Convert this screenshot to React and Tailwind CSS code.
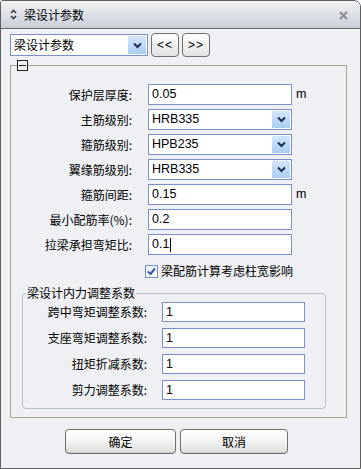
import React from "react";

const cjk = { fontFamily: '"Noto Sans CJK SC", "Noto Sans", sans-serif' };
const lat = { fontFamily: '"Liberation Sans", "Noto Sans CJK SC", sans-serif' };

function Arrow() {
  return (
    <div className="absolute right-[1px] top-[1px] bottom-[1px] w-[18px] flex items-center justify-center bg-gradient-to-b from-[#d3e6fb] to-[#a9cdf3]">
      <svg width="9" height="7" viewBox="0 0 9 7">
        <path d="M1 1.5 L4.5 5 L8 1.5" stroke="#1f2d4d" strokeWidth="2" fill="none" />
      </svg>
    </div>
  );
}

function Input({ value, cursor, w = "w-[144px]", h = "h-[21px]" }) {
  return (
    <div className={`${w} ${h} border border-[#7b8fc8] bg-white flex items-center pl-[3px] text-[12.5px] text-black`} style={lat}>
      {value}
      {cursor && <span className="inline-block w-px h-[14px] bg-black ml-px" />}
    </div>
  );
}

function Select({ value }) {
  return (
    <div className="relative w-[144px] h-[21px] border border-[#7b8fc8] bg-white flex items-center pl-[3px] text-[12.5px] text-black" style={lat}>
      {value}
      <Arrow />
    </div>
  );
}

function Row({ label, children, unit }) {
  return (
    <div className="flex items-center h-[21px]">
      <div className="w-[122px] text-right text-[12px] text-black pr-[1px]" style={cjk}>{label}</div>
      <div className="ml-[15px]">{children}</div>
      {unit && <div className="ml-[4px] text-[12.5px] text-black" style={lat}>{unit}</div>}
    </div>
  );
}

function Row2({ label, value }) {
  return (
    <div className="flex items-center h-[20px]">
      <div className="w-[124px] text-right text-[12px] text-black" style={cjk}>{label}</div>
      <div className="ml-[15px]">
        <Input value={value} w="w-[143px]" h="h-[20px]" />
      </div>
    </div>
  );
}

function Btn({ children, w }) {
  return (
    <div className={`${w} h-[25px] rounded-[4px] border border-[#6f6f6f] bg-gradient-to-b from-[#ffffff] via-[#f3f3f3] to-[#dcdcdc] flex items-center justify-center text-[12px] text-black shadow-[inset_0_-1px_0_#c8c8c8]`} style={cjk}>
      {children}
    </div>
  );
}

export default function App() {
  return (
    <div className="w-[361px] h-[469px] bg-white">
      <div className="w-[361px] h-[469px] border border-[#5e5e5e] rounded-tr-[7px] rounded-tl-[3px] bg-[#eef0f4] flex flex-col overflow-hidden">
        {/* title bar */}
        <div className="h-[28px] border-b border-[#6a6a6a] bg-gradient-to-b from-[#f2f3f5] to-[#c8ced8] flex items-center relative">
          <svg className="ml-[9px]" width="7" height="11" viewBox="0 0 7 11">
            <path d="M1 4 L3.5 1.5 L6 4" stroke="#3c3c3c" strokeWidth="1.6" fill="none" />
            <path d="M1 7 L3.5 9.5 L6 7" stroke="#3c3c3c" strokeWidth="1.6" fill="none" />
          </svg>
          <span className="ml-[7px] text-[12px] text-black" style={cjk}>梁设计参数</span>
          <svg className="absolute right-[12px] top-[10px]" width="9" height="9" viewBox="0 0 9 9">
            <path d="M1 1 L8 8 M8 1 L1 8" stroke="#8d8f93" strokeWidth="2.2" />
          </svg>
        </div>

        {/* toolbar */}
        <div className="flex items-center h-[24px] mt-[4px] pl-[9px]">
          <div className="relative w-[138px] h-[22px] border border-[#7b8fc8] bg-white flex items-center pl-[3px] text-[12px] text-black" style={cjk}>
            梁设计参数
            <Arrow />
          </div>
          <div className="ml-[3px] w-[28px] h-[24px] rounded-[4px] border border-[#6f6f6f] bg-gradient-to-b from-white to-[#e2e2e2] flex items-center justify-center text-[12px] tracking-[1px]" style={lat}>&lt;&lt;</div>
          <div className="ml-[3px] w-[28px] h-[24px] rounded-[4px] border border-[#6f6f6f] bg-gradient-to-b from-white to-[#e2e2e2] flex items-center justify-center text-[12px] tracking-[1px]" style={lat}>&gt;&gt;</div>
        </div>

        {/* outer group */}
        <div className="relative mt-[8px] ml-[9px] w-[337px] border border-[#aaa693] pt-[18px] pb-[8px]">
          <div className="absolute left-[6px] top-[-6px] w-[11px] h-[11px] border border-[#222] bg-[#eef0f4] flex items-center justify-center">
            <div className="w-[7px] h-[1px] bg-[#222]" />
          </div>
          <div className="flex flex-col gap-[4px]">
            <Row label="保护层厚度:" unit="m"><Input value="0.05" /></Row>
            <Row label="主筋级别:"><Select value="HRB335" /></Row>
            <Row label="箍筋级别:"><Select value="HPB235" /></Row>
            <Row label="翼缘筋级别:"><Select value="HRB335" /></Row>
            <Row label="箍筋间距:" unit="m"><Input value="0.15" /></Row>
            <Row label="最小配筋率(%):"><Input value="0.2" /></Row>
            <Row label="拉梁承担弯矩比:"><Input value="0.1" cursor /></Row>
          </div>
          <div className="flex items-center h-[16px] mt-[8px] pl-[134px]">
            <div className="w-[13px] h-[13px] border border-[#7b8fc8] bg-gradient-to-br from-[#e8eaf0] to-white flex items-center justify-center">
              <svg width="9" height="9" viewBox="0 0 9 9">
                <path d="M1 4.5 L3.5 7 L8 1.5" stroke="#3a55b0" strokeWidth="2" fill="none" />
              </svg>
            </div>
            <span className="ml-[3px] text-[12px] text-black" style={cjk}>梁配筋计算考虑柱宽影响</span>
          </div>

          {/* inner group */}
          <div className="relative mt-[14px] ml-[11px] w-[304px] border border-[#b9c0cf] rounded-[4px] pt-[8px] pb-[8px]">
            <div className="absolute left-[3px] top-[-9px] px-[1px] bg-[#eef0f4] text-[12px] text-black leading-[16px]" style={cjk}>梁设计内力调整系数</div>
            <div className="flex flex-col gap-[6px]">
              <Row2 label="跨中弯矩调整系数:" value="1" />
              <Row2 label="支座弯矩调整系数:" value="1" />
              <Row2 label="扭矩折减系数:" value="1" />
              <Row2 label="剪力调整系数:" value="1" />
            </div>
          </div>
        </div>

        {/* buttons */}
        <div className="flex mt-[11px] pl-[64px] gap-[4px]">
          <Btn w="w-[111px]">确定</Btn>
          <Btn w="w-[108px]">取消</Btn>
        </div>
      </div>
    </div>
  );
}
